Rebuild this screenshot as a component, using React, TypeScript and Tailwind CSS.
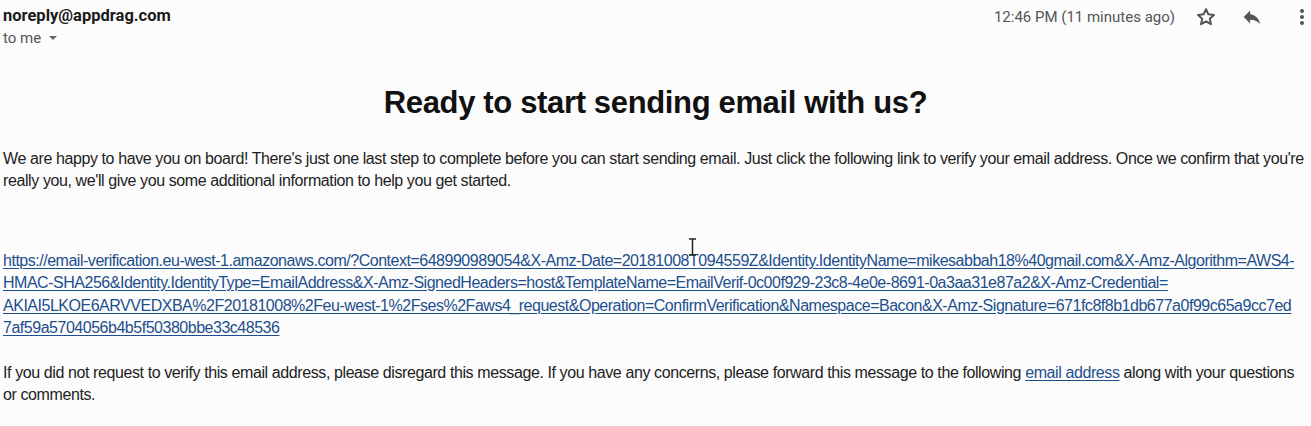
import React from "react";

const linkLines = [
  "https://email-verification.eu-west-1.amazonaws.com/?Context=648990989054&X-Amz-Date=20181008T094559Z&Identity.IdentityName=mikesabbah18%40gmail.com&X-Amz-Algorithm=AWS4-",
  "HMAC-SHA256&Identity.IdentityType=EmailAddress&X-Amz-SignedHeaders=host&TemplateName=EmailVerif-0c00f929-23c8-4e0e-8691-0a3aa31e87a2&X-Amz-Credential=",
  "AKIAI5LKOE6ARVVEDXBA%2F20181008%2Feu-west-1%2Fses%2Faws4_request&Operation=ConfirmVerification&Namespace=Bacon&X-Amz-Signature=671fc8f8b1db677a0f99c65a9cc7ed",
  "7af59a5704056b4b5f50380bbe33c48536",
];

export default function App() {
  return (
    <div className="relative w-[1311px] h-[426px] overflow-hidden bg-[#fcfcfc]">
      {/* header */}
      <div className="flex items-start justify-between pl-[3px] pr-[6px] pt-[5px]">
        <div className="flex flex-col" style={{ fontFamily: "Roboto, 'Noto Sans', sans-serif" }}>
          <div className="text-[16.5px] font-bold leading-[22px] text-[#1a1a1a]">noreply@appdrag.com</div>
          <div className="flex items-center gap-[7px] text-[15px] leading-[22px] text-[#555]">
            <span>to me</span>
            <svg width="10" height="6" viewBox="0 0 10 6"><path d="M1 1h8L5 5z" fill="#666" /></svg>
          </div>
        </div>
        <div className="flex items-center pt-[1px]">
          <span className="text-[15px] text-[#555] mr-[20px]" style={{ fontFamily: "Roboto, 'Noto Sans', sans-serif" }}>
            12:46 PM (11 minutes ago)
          </span>
          <svg width="22" height="22" viewBox="0 0 24 24" className="mr-[24px]">
            <path
              d="M12 3.5l2.6 5.6 6.1.6-4.6 4.1 1.3 6-5.4-3.1-5.4 3.1 1.3-6-4.6-4.1 6.1-.6z"
              fill="none"
              stroke="#555"
              strokeWidth="2.2"
              strokeLinejoin="round"
            />
          </svg>
          <svg width="22" height="22" viewBox="0 0 24 24" className="mr-[36px]">
            <path d="M10 9V5l-7 7 7 7v-4.1c5 0 8.5 1.6 11 5.1-1-5-4-10-11-11z" fill="#555" />
          </svg>
          <svg width="6" height="22" viewBox="0 0 6 22">
            <circle cx="3" cy="5" r="2" fill="#555" />
            <circle cx="3" cy="11" r="2" fill="#555" />
            <circle cx="3" cy="17" r="2" fill="#555" />
          </svg>
        </div>
      </div>

      {/* body */}
      <div
        className="px-[3px] text-[#222]"
        style={{ fontFamily: "'Liberation Sans', Arial, sans-serif" }}
      >
        <h1 className="mt-[37px] text-center text-[31px] font-bold leading-[34px] text-[#111] tracking-[-0.35px]">
          Ready to start sending email with us?
        </h1>
        <p className="mt-[28px] text-[16px] leading-[22px] tracking-[-0.4px] whitespace-nowrap">
          <span className="block">
            We are happy to have you on board! There's just one last step to complete before you can start sending email. Just click the following link to verify your email address. Once we confirm that you're
          </span>
          <span className="block">really you, we'll give you some additional information to help you get started.</span>
        </p>
        <p className="mt-[58px] text-[16px] leading-[22.4px] tracking-[-0.48px] whitespace-nowrap">
          {linkLines.map((l) => (
            <a key={l} href="#" className="block text-[#1d4f8c] underline underline-offset-2">
              {l}
            </a>
          ))}
        </p>
        <p className="mt-[22px] text-[16px] leading-[22px] tracking-[-0.4px] whitespace-nowrap">
          <span className="block">
            If you did not request to verify this email address, please disregard this message. If you have any concerns, please forward this message to the following{" "}
            <a href="#" className="text-[#1d4f8c] underline underline-offset-2">email address</a> along with your questions
          </span>
          <span className="block">or comments.</span>
        </p>
      </div>

      {/* text cursor overlay */}
      <svg className="absolute left-[688px] top-[238px]" width="9" height="18" viewBox="0 0 9 18">
        <path d="M1 1h7M4.5 1v16M1 17h7" stroke="#222" strokeWidth="1.5" fill="none" />
      </svg>
    </div>
  );
}
